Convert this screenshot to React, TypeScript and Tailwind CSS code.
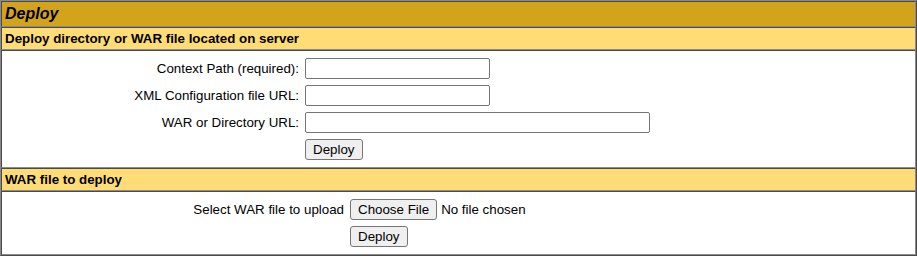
import React from 'react';

const cell =
  'border border-t-[#4a4a4a] border-l-[#4a4a4a] border-b-[#8a8a8a] border-r-[#8a8a8a]';

const Btn = ({ children }: { children: React.ReactNode }) => (
  <button className="h-[21px] rounded-[3px] border border-[#767676] bg-[#efefef] px-[7px] text-[13.33px] leading-[15px] text-black">
    {children}
  </button>
);

const TextField = ({ width }: { width: string }) => (
  <input
    type="text"
    className={`h-[21px] rounded-[2px] border border-[#767676] bg-white px-[2px] text-[13.33px] ${width}`}
  />
);

const Row = ({ label, labelWidth, children }: { label?: string; labelWidth: string; children: React.ReactNode }) => (
  <div className="flex h-[27px] items-center">
    <div className={`${labelWidth} shrink-0 px-[3px] text-right`}>{label}</div>
    <div className="flex items-center px-[3px]">{children}</div>
  </div>
);

const App = () => {
  return (
    <div className="w-[917px] bg-white font-['Liberation_Sans',Arial,sans-serif] text-[13.33px] leading-[15px] text-black">
      <div className="border border-t-[#8a8a8a] border-l-[#8a8a8a] border-b-[#4a4a4a] border-r-[#4a4a4a]">
        <div className={`${cell} bg-[#d2a41c] p-[3px] text-[16px] leading-[18px] font-bold italic`}>Deploy</div>
        <div className={`${cell} bg-[#ffdc75] p-[3px] font-bold`}>Deploy directory or WAR file located on server</div>
        <div className={`${cell} px-[3px] pt-[4px] pb-[4px]`}>
          <Row label="Context Path (required):" labelWidth="w-[297px]">
            <TextField width="w-[185px]" />
          </Row>
          <Row label="XML Configuration file URL:" labelWidth="w-[297px]">
            <TextField width="w-[185px]" />
          </Row>
          <Row label="WAR or Directory URL:" labelWidth="w-[297px]">
            <TextField width="w-[345px]" />
          </Row>
          <Row labelWidth="w-[297px]">
            <Btn>Deploy</Btn>
          </Row>
        </div>
        <div className={`${cell} bg-[#ffdc75] p-[3px] font-bold`}>WAR file to deploy</div>
        <div className={`${cell} px-[3px] pt-[4px] pb-[4px]`}>
          <Row label="Select WAR file to upload" labelWidth="w-[342px]">
            <Btn>Choose File</Btn>
            <span className="ml-[4px]">No file chosen</span>
          </Row>
          <Row labelWidth="w-[342px]">
            <Btn>Deploy</Btn>
          </Row>
        </div>
      </div>
    </div>
  );
};

export default App;
